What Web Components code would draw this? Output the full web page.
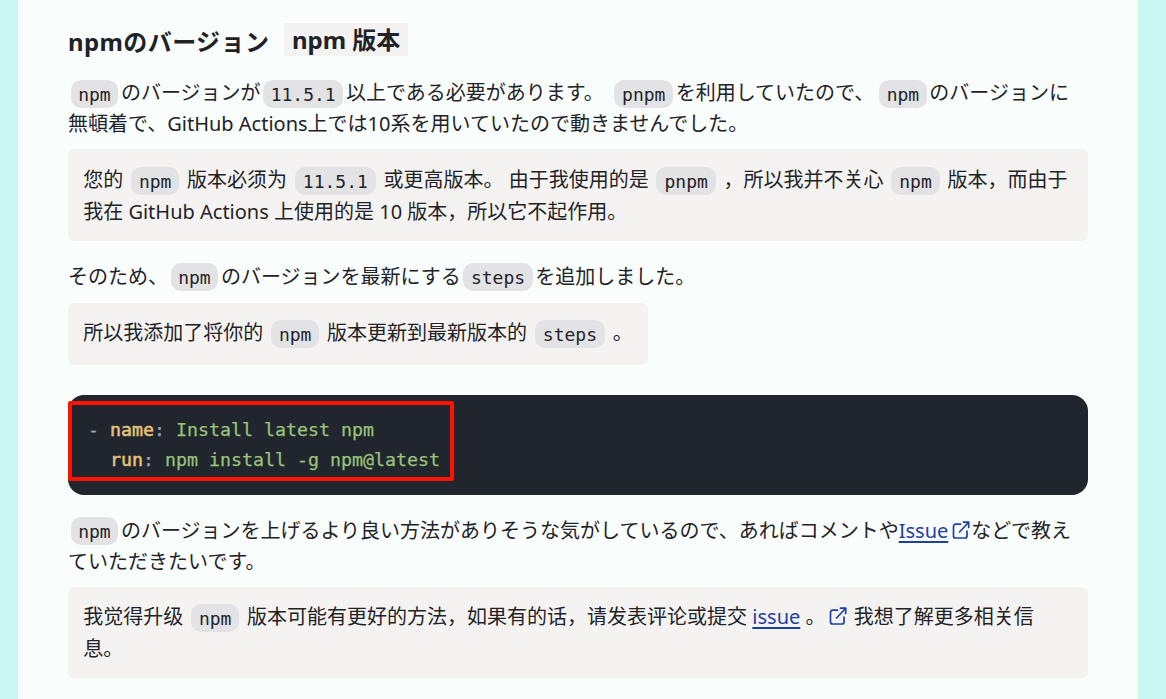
<!DOCTYPE html>
<html lang="ja"><head><meta charset="utf-8">
<style>
html,body{margin:0;padding:0;height:699px;overflow:hidden;background:#c8f8f1;}
body{font-family:"Noto Sans","Noto Sans CJK JP",sans-serif;font-size:20px;color:#1f2328;line-height:30px;}
</style></head><body>
<template id="t-page"><style>
:host{display:block;margin:0 28px 0 18px;background:#f9fdfc;padding:22px 50px 0;height:677px;overflow:hidden;}
</style><slot></slot></template>
<template id="t-h"><style>
:host{display:block;font-size:24px;font-weight:700;line-height:40px;height:40px;margin:0 0 16px;letter-spacing:.4px;}
</style><slot></slot></template>
<template id="t-tag"><style>
:host{display:inline-block;background:#f4f3f1;padding:0 8px;margin-left:8px;line-height:33px;letter-spacing:0;vertical-align:2px;}
</style><slot></slot></template>
<template id="t-p"><style>
:host{display:block;margin:0 0 10.4px;line-height:30px;--cx:7.7px;}
</style><slot></slot></template>
<template id="t-c"><style>
:host{display:inline;font-family:"DejaVu Sans Mono",monospace;font-size:18px;background:#e3e2e5;border-radius:10px;padding:var(--pt,3.5px) var(--cx,8px) var(--pb,3.5px);margin:0 2.5px 0 var(--ml,2.5px);vertical-align:var(--va,baseline);}
</style><slot></slot></template>
<template id="t-tr"><style>
:host{display:block;width:fit-content;box-sizing:border-box;max-width:100%;background:#f4f3f1;border-radius:6px;padding:15.2px 15.2px 14.2px;margin:0 0 21px;font-family:"Noto Sans","Noto Sans CJK SC",sans-serif;line-height:30px;--va:-1px;--pt:4px;--pb:3px;}
</style><slot></slot></template>
<template id="t-pre"><style>
:host{display:block;position:relative;background:#21252e;border-radius:16px;margin:30px 0 21px;height:100px;box-sizing:border-box;padding:20px 20px;font-family:"DejaVu Sans Mono",monospace;font-size:18.27px;line-height:30px;color:#9aa5b5;white-space:pre;-webkit-text-stroke:.25px currentColor;}
.o{position:absolute;left:0;top:6px;width:386px;height:80px;box-sizing:border-box;border:4px solid #ff1200;border-radius:2px;}
</style><slot></slot><div class="o"></div></template>
<template id="t-a"><style>
:host{display:inline;color:#1d40a8;text-decoration:underline;text-underline-offset:3px;}
</style><slot></slot></template>
<template id="t-ext"><style>
:host{display:inline-block;color:#1d40a8;width:18px;height:18px;vertical-align:-1px;margin:0 1px 0 4px;}
svg{display:block;width:18px;height:18px;}
</style><svg viewBox="0 0 18 18" fill="none" stroke="currentColor" stroke-width="1.7" stroke-linecap="round" stroke-linejoin="round"><path d="M8.5 3.2H3.5a2 2 0 0 0-2 2V15a2 2 0 0 0 2 2h9.5a2 2 0 0 0 2-2V10"/><path d="M7.5 11 16.5 1.5"/><path d="M11.5 1.2h5.2v5.2"/></svg></template>
<x-page>
<x-h>npmのバージョン <x-tag>npm 版本</x-tag></x-h>
<x-p><x-c>npm</x-c>のバージョンが<x-c>11.5.1</x-c>以上である必要があります。 <x-c style="--ml:5.5px">pnpm</x-c>を利用していたので、 <x-c style="--ml:-.5px">npm</x-c>のバージョンに<wbr>無頓着で、GitHub Actions上では10系を用いていたので動きませんでした。</x-p>
<x-tr>您的 <x-c>npm</x-c> 版本必须为 <x-c>11.5.1</x-c> 或更高版本。 由于我使用的是 <x-c>pnpm</x-c> ，所以我并不关心 <x-c>npm</x-c> 版本，而由于我在 GitHub Actions 上使用的是 10 版本，所以它不起作用。</x-tr>
<x-p>そのため、<x-c>npm</x-c>のバージョンを最新にする<x-c>steps</x-c>を追加しました。</x-p>
<x-tr>所以我添加了将你的 <x-c>npm</x-c> 版本更新到最新版本的 <x-c>steps</x-c> 。</x-tr>
<x-pre><span style="color:#9aa5b5">- </span><span style="color:#e5c07b;-webkit-text-stroke:.55px currentColor">name</span>: <span style="color:#98c379">Install latest npm</span>
  <span style="color:#e5c07b;-webkit-text-stroke:.55px currentColor">run</span>: <span style="color:#98c379">npm install -g npm@latest</span></x-pre>
<x-p><x-c>npm</x-c>のバージョンを上げるより良い方法がありそうな気がしているので、あればコメントや<x-a>Issue</x-a><x-ext></x-ext>などで教えていただきたいです。</x-p>
<x-tr style="width:auto">我觉得升级 <x-c>npm</x-c> 版本可能有更好的方法，如果有的话，请发表评论或提交 <x-a>issue</x-a> 。<x-ext></x-ext> 我想了解更多相关信<br>息。</x-tr>
</x-page>
<script>
for (const [tag,id] of [["x-page","t-page"],["x-h","t-h"],["x-tag","t-tag"],["x-p","t-p"],["x-c","t-c"],["x-tr","t-tr"],["x-pre","t-pre"],["x-a","t-a"],["x-ext","t-ext"]]) {
  customElements.define(tag, class extends HTMLElement {
    constructor(){super();this.attachShadow({mode:"open"}).appendChild(document.getElementById(id).content.cloneNode(true));}
  });
}
</script>
</body></html>
